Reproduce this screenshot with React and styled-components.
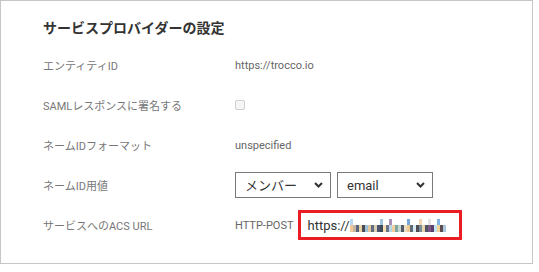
import React from "react";
import styled, { createGlobalStyle } from "styled-components";

const Global = createGlobalStyle`
  html, body { margin: 0; padding: 0; background: #fff; }
  body { font-family: Roboto, "Noto Sans CJK JP", sans-serif; }
  * { box-sizing: border-box; }
`;

const Frame = styled.div`
  width: 533px;
  height: 264px;
  border: 1px solid #c6c6c6;
  padding: 16px 0 0 42px;
`;

const Title = styled.h2`
  margin: 0 0 6px 0;
  font-size: 14px;
  line-height: 22px;
  font-weight: 700;
  color: #333;
`;

const Row = styled.div`
  display: grid;
  grid-template-columns: 192px 1fr;
  align-items: center;
  height: 40px;
`;

const Label = styled.div`
  font-size: 11px;
  color: #777;
`;

const Value = styled.div`
  display: flex;
  align-items: center;
  gap: ${(p) => p.$gap || 0}px;
  font-size: 11px;
  color: #666;
`;

const Check = styled.span`
  display: block;
  width: 10px;
  height: 10px;
  border: 1px solid #d0d0d0;
  border-radius: 2px;
  background: #f6f6f6;
`;

const SelectWrap = styled.div`
  position: relative;
  width: 96px;
  height: 26px;
`;

const Select = styled.select`
  appearance: none;
  width: 100%;
  height: 100%;
  border: 1px solid #7a7a7a;
  border-radius: 0;
  background: #fff;
  padding: 0 0 0 9px;
  font-family: Roboto, "Noto Sans CJK JP", sans-serif;
  font-size: 13px;
  color: #333;
  outline: none;
`;

const Chevron = styled.svg`
  position: absolute;
  right: 8px;
  top: 10px;
  pointer-events: none;
`;

const Highlight = styled.div`
  width: 164px;
  height: 30px;
  border: 3px solid #ea1c24;
  display: flex;
  align-items: center;
  padding-left: 7px;
  font-size: 13px;
  color: #333;
`;

const mosaic = [
  ["#a9d4ee", "#f2c79a"],
  [null, "#c8b7a0"],
  [null, "#5a6680"],
  [null, "#e9d3a6"],
  [null, "#4b4b55"],
  [null, "#9bc0d8"],
  [null, "#e2c69c"],
  [null, "#636d80"],
  [null, "#d9d0b3"],
  [null, "#4e5570"],
  ["#8fb8d8", "#3f4a5a"],
  [null, "#f6e1b4"],
  [null, "#6a7585"],
  ["#9b7ca8", "#b7d6e6"],
  [null, "#f3d0a0"],
  [null, "#7fa8a0"],
  [null, "#c8d9d2"],
  [null, "#565a66"],
  [null, "#e8e0c5"],
  ["#5b9bd5", "#f0c890"],
  [null, "#5e6b7a"],
  [null, "#d6ecf4"],
  [null, "#4d4d56"],
  ["#f1cfa4", "#7b8c9a"],
  [null, "#e9d6ae"],
  [null, "#505565"],
  ["#e0dede", "#7b5b86"],
  [null, "#5c3f6e"],
  [null, "#bfe5f5"],
  ["#6aa9e0", "#f0d29a"],
  [null, "#5b4d4d"],
  [null, "#a9c8e0"],
];

function Mosaic() {
  return (
    <svg width={mosaic.length * 3} height="13" style={{ display: "block" }}>
      {mosaic.map(([t, b], i) => (
        <g key={i}>
          {t && <rect x={i * 3} y="0" width="3" height="6" fill={t} opacity="0.85" />}
          {b && <rect x={i * 3} y="6" width="3" height="7" fill={b} />}
        </g>
      ))}
    </svg>
  );
}

function Chev() {
  return (
    <Chevron width="9" height="6" viewBox="0 0 9 6">
      <path d="M1 1l3.5 3.5L8 1" fill="none" stroke="#333" strokeWidth="2" />
    </Chevron>
  );
}

export default function App() {
  return (
    <>
      <Global />
      <Frame>
        <Title>サービスプロバイダーの設定</Title>
        <Row>
          <Label>エンティティID</Label>
          <Value>https://trocco.io</Value>
        </Row>
        <Row>
          <Label>SAMLレスポンスに署名する</Label>
          <Value>
            <Check />
          </Value>
        </Row>
        <Row>
          <Label>ネームIDフォーマット</Label>
          <Value>unspecified</Value>
        </Row>
        <Row>
          <Label>ネームID用値</Label>
          <Value $gap={6}>
            <SelectWrap>
              <Select defaultValue="member">
                <option value="member">メンバー</option>
              </Select>
              <Chev />
            </SelectWrap>
            <SelectWrap>
              <Select defaultValue="email">
                <option value="email">email</option>
              </Select>
              <Chev />
            </SelectWrap>
          </Value>
        </Row>
        <Row>
          <Label>サービスへのACS URL</Label>
          <Value $gap={4}>
            HTTP-POST
            <Highlight>
              https://
              <Mosaic />
            </Highlight>
          </Value>
        </Row>
      </Frame>
    </>
  );
}
